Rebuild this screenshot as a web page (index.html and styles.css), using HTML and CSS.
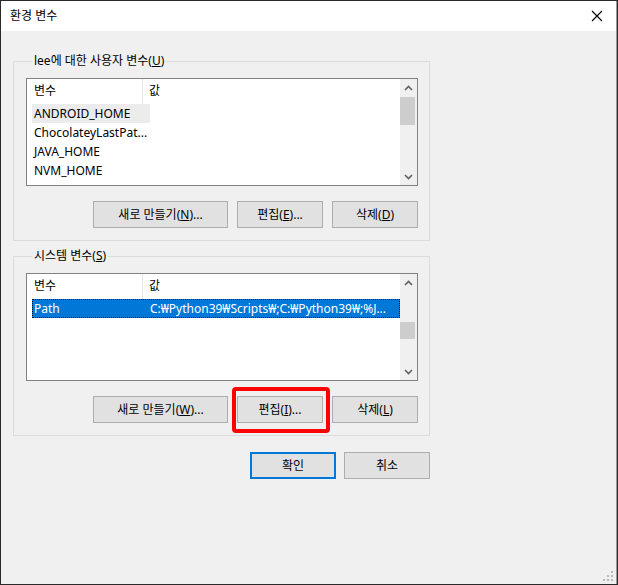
FILE: index.html
```html
<!DOCTYPE html>
<html lang="ko">
<head>
    <meta charset="UTF-8">
    <meta name="viewport" content="width=device-width, initial-scale=1.0">
    <title>환경 변수</title>
    <link rel="stylesheet" href="styles.css">
</head>
<body>

    <div class="window">
        <div class="titlebar">
            <span class="title">환경 변수</span>
            <span class="close">
                <svg width="12" height="12" viewBox="0 0 12 12"><path d="M1 1 L11 11 M11 1 L1 11" stroke="#000" stroke-width="1.1" fill="none"/></svg>
            </span>
        </div>

        <div class="content">
            <div class="group">
                <div class="legend">lee에 대한 사용자 변수(<u>U</u>)</div>
                <div class="listview">
                    <div class="list-body">
                        <div class="list-header">
                            <div class="col-name">변수</div>
                            <div class="col-value">값</div>
                        </div>
                        <div class="row inactive"><div class="cell-name">ANDROID_HOME</div><div class="cell-value"></div></div>
                        <div class="row"><div class="cell-name">ChocolateyLastPat...</div><div class="cell-value"></div></div>
                        <div class="row"><div class="cell-name">JAVA_HOME</div><div class="cell-value"></div></div>
                        <div class="row"><div class="cell-name">NVM_HOME</div><div class="cell-value"></div></div>
                    </div>
                    <div class="scrollbar">
                        <div class="arrow"><svg width="9" height="6" viewBox="0 0 9 6"><path d="M1 5 L4.5 1.5 L8 5" stroke="#606060" stroke-width="1.6" fill="none"/></svg></div>
                        <div class="track"><div class="thumb thumb-user"></div></div>
                        <div class="arrow"><svg width="9" height="6" viewBox="0 0 9 6"><path d="M1 1 L4.5 4.5 L8 1" stroke="#606060" stroke-width="1.6" fill="none"/></svg></div>
                    </div>
                </div>
                <div class="buttons">
                    <button class="btn btn-wide">새로 만들기(<u>N</u>)...</button>
                    <button class="btn">편집(<u>E</u>)...</button>
                    <button class="btn">삭제(<u>D</u>)</button>
                </div>
            </div>

            <div class="group">
                <div class="legend">시스템 변수(<u>S</u>)</div>
                <div class="listview">
                    <div class="list-body">
                        <div class="list-header">
                            <div class="col-name">변수</div>
                            <div class="col-value">값</div>
                        </div>
                        <div class="row selected"><div class="cell-name">Path</div><div class="cell-value">C:₩Python39₩Scripts₩;C:₩Python39₩;%J...</div></div>
                    </div>
                    <div class="scrollbar">
                        <div class="arrow"><svg width="9" height="6" viewBox="0 0 9 6"><path d="M1 5 L4.5 1.5 L8 5" stroke="#606060" stroke-width="1.6" fill="none"/></svg></div>
                        <div class="track"><div class="thumb thumb-system"></div></div>
                        <div class="arrow"><svg width="9" height="6" viewBox="0 0 9 6"><path d="M1 1 L4.5 4.5 L8 1" stroke="#606060" stroke-width="1.6" fill="none"/></svg></div>
                    </div>
                </div>
                <div class="buttons">
                    <button class="btn btn-wide">새로 만들기(<u>W</u>)...</button>
                    <span class="marked"><button class="btn">편집(<u>I</u>)...</button></span>
                    <button class="btn">삭제(<u>L</u>)</button>
                </div>
            </div>

            <div class="dialog-buttons">
                <button class="btn btn-default">확인</button>
                <button class="btn">취소</button>
            </div>
        </div>

        <span class="grip">
            <svg width="11" height="11" viewBox="0 0 11 11" fill="#b8b8b8">
                <rect x="8" y="0" width="2" height="2"/>
                <rect x="4" y="4" width="2" height="2"/><rect x="8" y="4" width="2" height="2"/>
                <rect x="0" y="8" width="2" height="2"/><rect x="4" y="8" width="2" height="2"/><rect x="8" y="8" width="2" height="2"/>
            </svg>
        </span>
    </div>

</body>
</html>
```

FILE: styles.css
```css
body {
    margin: 0;
    padding: 1px;
    background-color: #2a2a2a;
    font-family: 'Noto Sans', 'Noto Sans CJK KR', sans-serif;
    font-size: 12px;
    color: #000;
}

.window {
    position: relative;
    width: 616px;
    height: 583px;
    background-color: #f0f0f0;
    box-sizing: border-box;
    border-right: 1px solid #9a9a9a;
}

.titlebar {
    height: 30px;
    background-color: #fff;
    display: flex;
    align-items: center;
    justify-content: space-between;
    padding: 0 10px 0 9px;
}

.title {
    line-height: 16px;
}

.close {
    display: flex;
    margin-right: 3px;
}

.content {
    padding: 30px 0 0 12px;
}

.group {
    width: 417px;
    height: 180px;
    box-sizing: border-box;
    border: 1px solid #dcdcdc;
    padding: 0 12px;
}

.group + .group {
    margin-top: 15px;
}

.legend {
    width: max-content;
    margin: -9px 0 0 6px;
    padding: 0 2px;
    line-height: 16px;
    height: 16px;
    background-color: #f0f0f0;
}

.listview {
    display: flex;
    width: 392px;
    height: 108px;
    margin-top: 9px;
    box-sizing: border-box;
    border: 1px solid #828282;
    background-color: #fff;
}

.list-body {
    flex: 1;
    overflow: hidden;
}

.list-header {
    display: flex;
    height: 25px;
    line-height: 24px;
}

.col-name {
    width: 116px;
    padding-left: 7px;
    box-sizing: border-box;
    border-right: 1px solid #e5e5e5;
}

.col-value {
    padding-left: 6px;
}

.row {
    display: flex;
    height: 19px;
    line-height: 19px;
    margin-left: 5px;
    white-space: nowrap;
}

.cell-name {
    width: 118px;
    padding-left: 2px;
    box-sizing: border-box;
    overflow: hidden;
}

.cell-value {
    flex: 1;
    overflow: hidden;
}

.row.inactive .cell-name {
    background-color: #ececec;
}

.row.selected {
    background-color: #0078d7;
    color: #fff;
    outline: 1px dotted #1a1a1a;
    outline-offset: -1px;
}

.scrollbar {
    width: 17px;
    display: flex;
    flex-direction: column;
    background-color: #f0f0f0;
}

.arrow {
    height: 17px;
    display: flex;
    align-items: center;
    justify-content: center;
}

.track {
    flex: 1;
}

.thumb {
    width: 15px;
    margin-left: 0;
    background-color: #cdcdcd;
}

.thumb-user {
    height: 28px;
    margin-top: 1px;
}

.thumb-system {
    height: 17px;
    margin-top: 31px;
}

.buttons {
    display: flex;
    justify-content: flex-end;
    gap: 9px;
    margin-top: 15px;
    margin-right: -1px;
}

.btn {
    width: 86px;
    height: 27px;
    padding: 0;
    background-color: #e1e1e1;
    border: 1px solid #adadad;
    font-family: inherit;
    font-size: 12px;
    color: #000;
    line-height: 16px;
}

.btn-wide {
    width: 135px;
}

.btn-default {
    border: 2px solid #0078d7;
}

.marked {
    position: relative;
    display: flex;
}

.marked::after {
    content: "";
    position: absolute;
    top: -9px;
    bottom: -10px;
    left: -5px;
    right: -7px;
    border: 4px solid #f00;
    border-radius: 4px;
}

.dialog-buttons {
    display: flex;
    justify-content: flex-end;
    gap: 8px;
    width: 417px;
    margin-top: 16px;
}

.grip {
    position: absolute;
    right: 2px;
    bottom: 2px;
    display: flex;
}
```
